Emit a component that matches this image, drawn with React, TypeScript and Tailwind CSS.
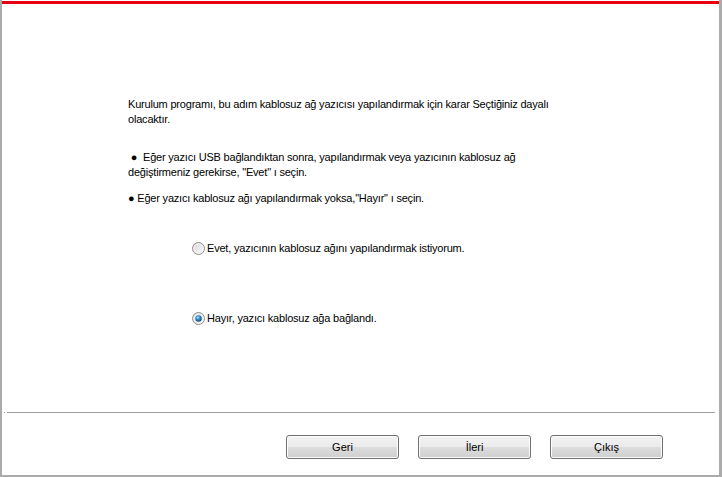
import React, { useState } from 'react'

function Radio({ checked }: { checked: boolean }) {
  return (
    <svg width="13" height="13" viewBox="0 0 13 13" className="shrink-0">
      <defs>
        <linearGradient id="rbg" x1="0" y1="0" x2="1" y2="1">
          <stop offset="0" stopColor="#d6d6d6" />
          <stop offset="1" stopColor="#fbfbfb" />
        </linearGradient>
        <radialGradient id="rdot" cx="0.4" cy="0.35" r="0.7">
          <stop offset="0" stopColor="#b9e4fb" />
          <stop offset="0.45" stopColor="#2f8ad1" />
          <stop offset="1" stopColor="#0e3f72" />
        </radialGradient>
      </defs>
      <circle cx="6.5" cy="6.5" r="6" fill="url(#rbg)" stroke="#8e8f8f" strokeWidth="1" />
      <circle cx="6.5" cy="6.5" r="4.5" fill="none" stroke="#f4f4f4" strokeWidth="1" />
      {checked && <circle cx="6.5" cy="6.5" r="3.2" fill="url(#rdot)" />}
    </svg>
  )
}

function WinButton({ label }: { label: string }) {
  return (
    <button className="w-[113px] h-[24px] rounded-[3px] border border-[#707070] bg-[linear-gradient(to_bottom,#f2f2f2_0%,#ebebeb_50%,#dddddd_51%,#cfcfcf_100%)] text-[11px] text-black shadow-[inset_0_0_0_1px_#fcfcfc]">
      {label}
    </button>
  )
}

export default function App() {
  const [choice, setChoice] = useState<'yes' | 'no'>('no')

  return (
    <div
      className="w-[722px] h-[477px] bg-white border-l-[2px] border-r-[3px] border-b-[2px] border-[#ababab] flex flex-col text-black"
      style={{ fontFamily: '"Liberation Sans", Arial, sans-serif' }}
    >
      <div className="mt-px h-[3px] bg-[#e60012]" />

      <div className="flex-1 pl-[126px] pt-[93px] text-[11px] leading-[15px] tracking-[-0.2px]">
        <p className="w-[440px]">
          Kurulum programı, bu adım kablosuz ağ yazıcısı yapılandırmak için karar Seçtiğiniz dayalı olacaktır.
        </p>
        <p className="mt-[23px] w-[420px]">
          &nbsp;● &nbsp;Eğer yazıcı USB bağlandıktan sonra, yapılandırmak veya yazıcının kablosuz ağ değiştirmeniz gerekirse, "Evet" ı seçin.
        </p>
        <p className="mt-[11px]">● Eğer yazıcı kablosuz ağı yapılandırmak yoksa,"Hayır" ı seçin.</p>

        <div className="ml-[64px] mt-[35px] flex flex-col gap-[55px]">
          <label className="flex items-center gap-[2px] cursor-default" onClick={() => setChoice('yes')}>
            <Radio checked={choice === 'yes'} />
            <span>Evet, yazıcının kablosuz ağını yapılandırmak istiyorum.</span>
          </label>
          <label className="flex items-center gap-[2px] cursor-default" onClick={() => setChoice('no')}>
            <Radio checked={choice === 'no'} />
            <span>Hayır, yazıcı kablosuz ağa bağlandı.</span>
          </label>
        </div>
      </div>

      <div className="flex items-center h-px">
        <div className="w-px h-px bg-[#a0a0a0] ml-[2px]" />
        <div className="ml-[2px] mr-[4px] flex-1 h-px bg-[#a0a0a0]" />
      </div>

      <div className="h-[62px] flex justify-end gap-[19px] pr-[56px] pt-[22px]">
        <WinButton label="Geri" />
        <WinButton label="İleri" />
        <WinButton label="Çıkış" />
      </div>
    </div>
  )
}
